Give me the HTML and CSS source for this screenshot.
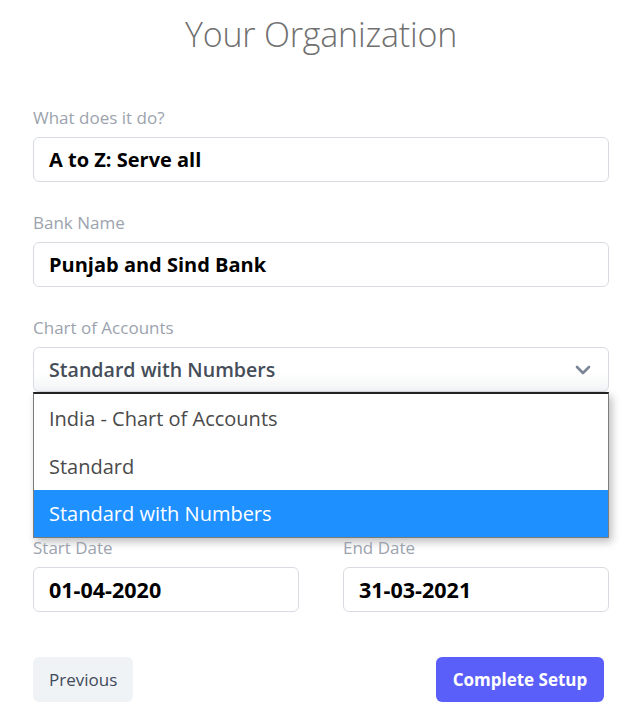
FILE: index.html
```html
<!DOCTYPE html>
<html>
<head>
<meta charset="utf-8">
<link rel="stylesheet" href="styles.css">
</head>
<body>
<div class="page">
  <h1 class="title">Your Organization</h1>
  <div class="field">
    <div class="label">What does it do?</div>
    <div class="input">A to Z: Serve all</div>
  </div>
  <div class="field">
    <div class="label">Bank Name</div>
    <div class="input">Punjab and Sind Bank</div>
  </div>
  <div class="field chart">
    <div class="label">Chart of Accounts</div>
    <div class="select-wrap">
      <div class="select">
        <span>Standard with Numbers</span>
        <svg class="chev" width="16" height="10" viewBox="0 0 16 10"><path d="M2 2 L8 8 L14 2" fill="none" stroke="#7a8698" stroke-width="2.6" stroke-linecap="round" stroke-linejoin="round"/></svg>
      </div>
      <div class="menu">
        <div class="opt">India - Chart of Accounts</div>
        <div class="opt">Standard</div>
        <div class="opt sel">Standard with Numbers</div>
      </div>
    </div>
  </div>
  <div class="row">
    <div class="field">
      <div class="label">Start Date</div>
      <div class="input date">01-04-2020</div>
    </div>
    <div class="field">
      <div class="label">End Date</div>
      <div class="input date">31-03-2021</div>
    </div>
  </div>
  <div class="footer">
    <button class="btn prev">Previous</button>
    <button class="btn primary">Complete Setup</button>
  </div>
</div>
</body>
</html>
```

FILE: styles.css
```css
* { box-sizing: border-box; }
body {
  margin: 0;
  background: #fff;
  font-family: "Open Sans", "Noto Sans", sans-serif;
}
.page {
  width: 639px;
  padding: 0 30px 0 33px;
}
.title {
  margin: 0;
  padding-top: 12px;
  height: 106px;
  text-align: center;
  font-weight: 300;
  font-size: 34px;
  line-height: 44px;
  color: #707070;
  letter-spacing: -0.2px;
}
.field { margin-bottom: 29px; }
.label {
  font-size: 17px;
  line-height: 24px;
  color: #9ca3ae;
  margin-bottom: 7px;
}
.input {
  height: 45px;
  border: 1px solid #d8dce2;
  border-radius: 6px;
  padding: 0 15px;
  display: flex;
  align-items: center;
  font-size: 20px;
  font-weight: 700;
  color: #000;
}
.input.date { font-size: 21.5px; }
.select-wrap { position: relative; }
.select {
  height: 45px;
  border: 1px solid #d8dce2;
  border-radius: 6px;
  padding: 0 15px;
  display: flex;
  align-items: center;
  justify-content: space-between;
  font-size: 19.6px;
  font-weight: 600;
  color: #454d59;
  background: linear-gradient(#fff 55%, #f3f4f6);
}
.chev { margin-right: 2px; }
.menu {
  position: absolute;
  left: 0;
  right: 0;
  top: 45px;
  background: #fff;
  border: 1px solid #7b7b7b;
  border-top: 2px solid #222;
  box-shadow: 3px 4px 8px rgba(0,0,0,0.25);
  z-index: 2;
}
.opt {
  height: 48px;
  padding: 0 15px;
  display: flex;
  align-items: center;
  font-size: 20px;
  color: #4a4a4a;
}
.opt.sel { background: #1e90ff; color: #fff; height: 47px; }
.chart { margin-bottom: 144px; }
.row {
  display: grid;
  grid-template-columns: 1fr 1fr;
  column-gap: 44px;
}
.row .field { margin-bottom: 0; }
.row .label { position: relative; z-index: 3; }
.footer {
  margin-top: 45px;
  display: flex;
  justify-content: space-between;
  padding-right: 5px;
}
.btn {
  height: 45px;
  border: none;
  border-radius: 6px;
  font-family: inherit;
  font-size: 17px;
  padding: 0 16px;
}
.prev {
  width: 100px;
  background: #f0f3f6;
  color: #3f4a5a;
}
.primary {
  width: 168px;
  background: #5b5ffa;
  color: #fff;
  font-weight: 700;
}
```
